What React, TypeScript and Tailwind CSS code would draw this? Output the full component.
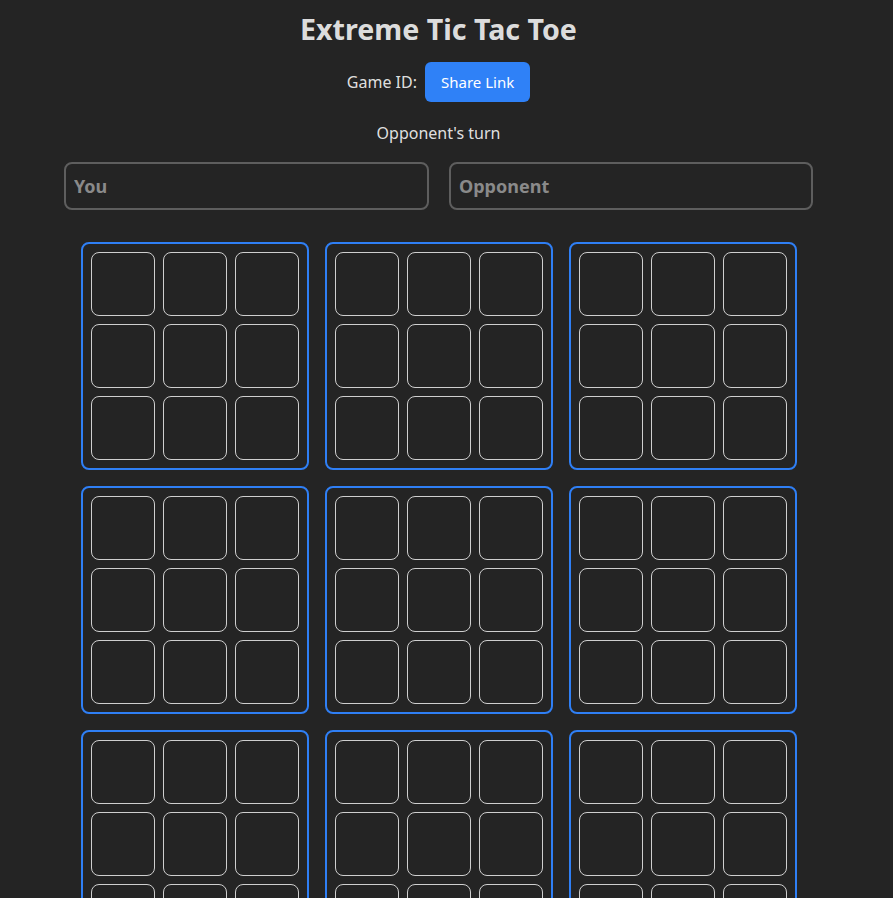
import { useState } from 'react';

const font = { fontFamily: '"Noto Sans", "Open Sans", Arial, sans-serif' };

function Board() {
  return (
    <div className="grid grid-cols-3 gap-2 rounded-lg border-2 border-[#2f7ff5] p-2">
      {Array.from({ length: 9 }).map((_, i) => (
        <button
          key={i}
          className="h-16 w-16 rounded-lg border border-[#cfcfcf] bg-transparent"
        />
      ))}
    </div>
  );
}

export default function App() {
  const [you, setYou] = useState('');
  const [opponent, setOpponent] = useState('');

  return (
    <div className="min-h-screen bg-[#242424] text-[rgba(255,255,255,0.87)]" style={font}>
      <div className="flex w-[877px] flex-col items-center pt-[11px]">
        <h1 className="text-[28.6px] font-bold leading-[36px]">Extreme Tic Tac Toe</h1>

        <div className="mt-[15px] flex items-center gap-2 text-base">
          <span>Game ID:</span>
          <button className="h-10 rounded-md bg-[#2f81f7] px-4 text-[15px] text-white">Share Link</button>
        </div>

        <p className="mt-[19px] text-base leading-6">Opponent's turn</p>

        <div className="mt-[17px] flex gap-5">
          <input
            className="h-12 w-[365px] rounded-lg border-2 border-[#5e5e5e] bg-transparent px-2 text-lg font-bold outline-none placeholder:text-[#8a8a8a]"
            placeholder="You"
            value={you}
            onChange={(e) => setYou(e.target.value)}
          />
          <input
            className="h-12 w-[364px] rounded-lg border-2 border-[#5e5e5e] bg-transparent px-2 text-lg font-bold outline-none placeholder:text-[#8a8a8a]"
            placeholder="Opponent"
            value={opponent}
            onChange={(e) => setOpponent(e.target.value)}
          />
        </div>

        <div className="mt-8 grid grid-cols-3 gap-4 pb-8">
          {Array.from({ length: 9 }).map((_, i) => (
            <Board key={i} />
          ))}
        </div>
      </div>
    </div>
  );
}
